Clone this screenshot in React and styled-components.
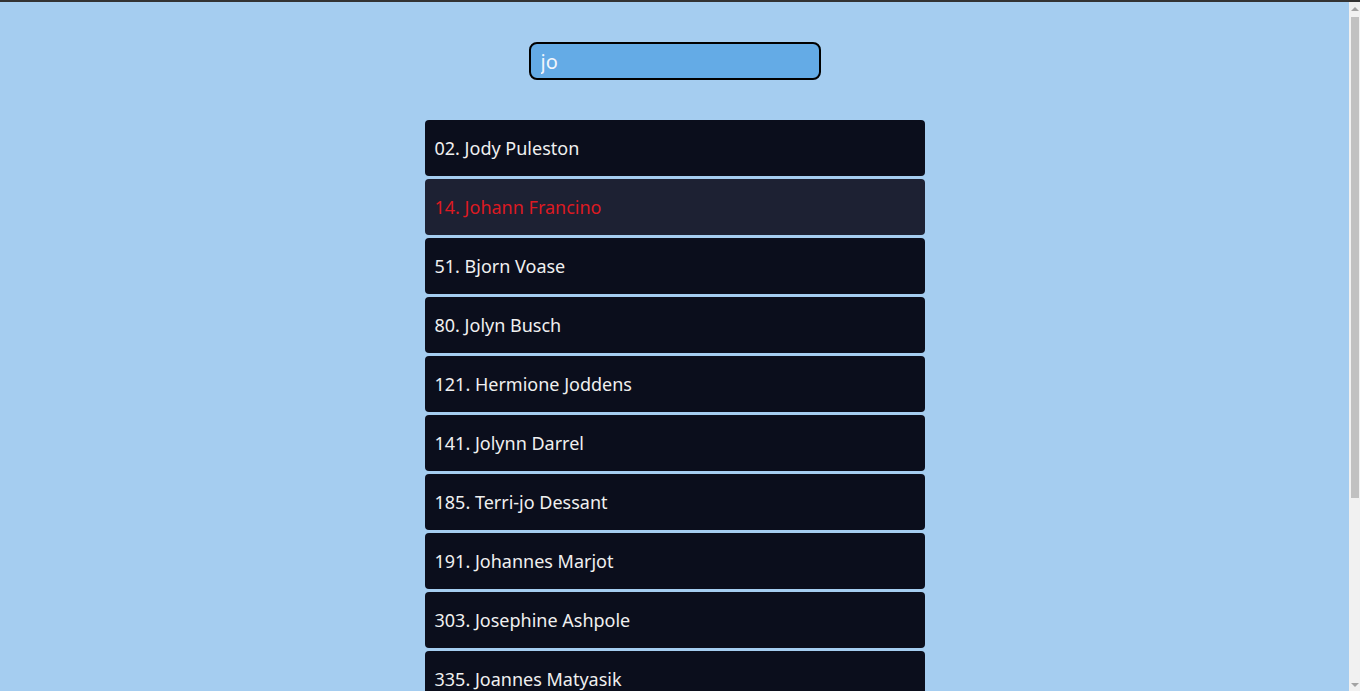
import React, { useState } from "react";
import styled, { createGlobalStyle } from "styled-components";

const people = [
  "02. Jody Puleston",
  "14. Johann Francino",
  "51. Bjorn Voase",
  "80. Jolyn Busch",
  "121. Hermione Joddens",
  "141. Jolynn Darrel",
  "185. Terri-jo Dessant",
  "191. Johannes Marjot",
  "303. Josephine Ashpole",
  "335. Joannes Matyasik",
  "412. Jobina Caldero",
  "467. Jorie Mattheeuw",
];

const GlobalStyle = createGlobalStyle`
  html, body {
    overflow: hidden;
  }
  body {
    margin: 0;
    background: #a5cdf0;
    font-family: "Noto Sans", "Open Sans", sans-serif;
  }
`;

const Page = styled.div`
  display: flex;
  flex-direction: column;
  align-items: center;
  border-top: 2px solid #333;
  padding: 40px 11px 40px 0;
  min-height: 100vh;
`;

const Search = styled.input`
  box-sizing: border-box;
  width: 292px;
  height: 38px;
  padding: 0 10px;
  border: 2px solid #000;
  border-radius: 8px;
  background: #64abe6;
  color: #f2f6fb;
  font-family: inherit;
  font-size: 20px;
  outline: none;
`;

const List = styled.ul`
  list-style: none;
  margin: 40px 0 0;
  padding: 0;
  width: 500px;
  display: flex;
  flex-direction: column;
  gap: 3px;
`;

const Item = styled.li`
  height: 56px;
  display: flex;
  align-items: center;
  padding: 0 10px;
  border-radius: 4px;
  background: ${(props) => (props.active ? "#1d2133" : "#0b0e1c")};
  color: ${(props) => (props.active ? "#dc1a22" : "#f0f0f0")};
  font-size: 18px;
`;

/* fake window scrollbar sitting over the right edge */
const ScrollTrack = styled.div`
  position: fixed;
  top: 2px;
  right: 0;
  bottom: 0;
  width: 11px;
  background: #f1f1f1;
`;

const Thumb = styled.div`
  position: absolute;
  top: 15px;
  left: 2px;
  right: 1px;
  height: 481px;
  background: #c1c1c1;
`;

const Arrow = styled.div`
  position: absolute;
  left: 2px;
  width: 0;
  height: 0;
  border-left: 4px solid transparent;
  border-right: 4px solid transparent;
  ${(props) =>
    props.down
      ? "bottom: 4px; border-top: 4px solid #a3a3a3;"
      : "top: 5px; border-bottom: 4px solid #a3a3a3;"}
`;

const App = () => {
  const [query, setQuery] = useState("jo");

  return (
    <>
      <GlobalStyle />
      <Page>
        <Search
          autoFocus
          value={query}
          onChange={(e) => setQuery(e.target.value)}
        />
        <List>
          {people.map((name, i) => (
            <Item key={name} active={i === 1}>
              {name}
            </Item>
          ))}
        </List>
      </Page>
      <ScrollTrack>
        <Arrow />
        <Thumb />
        <Arrow down />
      </ScrollTrack>
    </>
  );
};

export default App;
